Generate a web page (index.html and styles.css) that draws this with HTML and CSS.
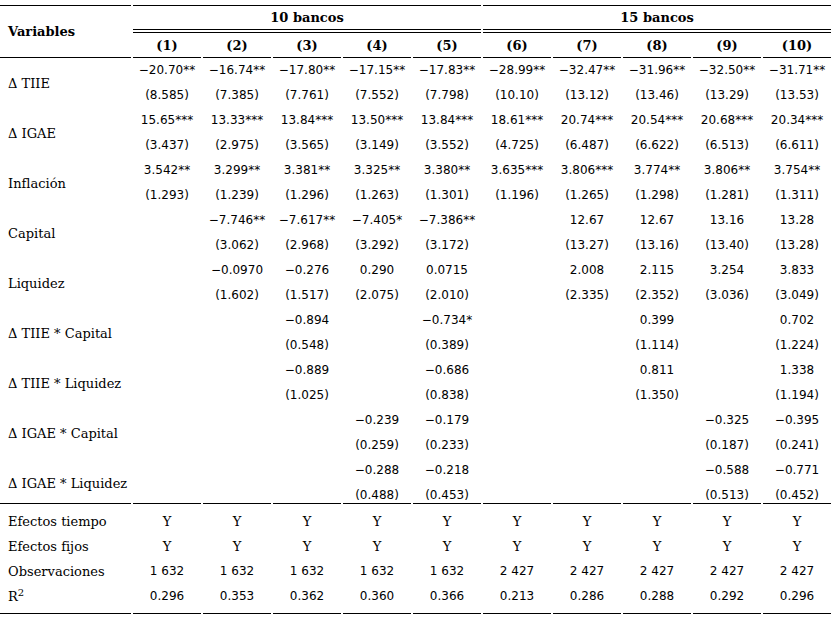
FILE: index.html
```html
<!DOCTYPE html>
<html lang="es">
<head>
<meta charset="utf-8">
<title>Resultados de la regresión</title>
<link rel="stylesheet" href="styles.css">
</head>
<body>
<table class="reg">
  <colgroup>
    <col class="c-label">
    <col class="c-num"><col class="c-num"><col class="c-num"><col class="c-num"><col class="c-num">
    <col class="c-num"><col class="c-num"><col class="c-num"><col class="c-num"><col class="c-num">
  </colgroup>
  <thead>
    <tr class="grp">
      <th class="var" rowspan="2">Variables</th>
      <th colspan="5">10 bancos</th>
      <th colspan="5">15 bancos</th>
    </tr>
    <tr class="mods">
      <th>(1)</th><th>(2)</th><th>(3)</th><th>(4)</th><th>(5)</th>
      <th>(6)</th><th>(7)</th><th>(8)</th><th>(9)</th><th>(10)</th>
    </tr>
  </thead>
  <tbody class="body">
    <tr><td class="lab" rowspan="2">Δ TIIE</td><td>−20.70**</td><td>−16.74**</td><td>−17.80**</td><td>−17.15**</td><td>−17.83**</td><td>−28.99**</td><td>−32.47**</td><td>−31.96**</td><td>−32.50**</td><td>−31.71**</td></tr>
    <tr><td>(8.585)</td><td>(7.385)</td><td>(7.761)</td><td>(7.552)</td><td>(7.798)</td><td>(10.10)</td><td>(13.12)</td><td>(13.46)</td><td>(13.29)</td><td>(13.53)</td></tr>
    <tr><td class="lab" rowspan="2">Δ IGAE</td><td>15.65***</td><td>13.33***</td><td>13.84***</td><td>13.50***</td><td>13.84***</td><td>18.61***</td><td>20.74***</td><td>20.54***</td><td>20.68***</td><td>20.34***</td></tr>
    <tr><td>(3.437)</td><td>(2.975)</td><td>(3.565)</td><td>(3.149)</td><td>(3.552)</td><td>(4.725)</td><td>(6.487)</td><td>(6.622)</td><td>(6.513)</td><td>(6.611)</td></tr>
    <tr><td class="lab" rowspan="2">Inflación</td><td>3.542**</td><td>3.299**</td><td>3.381**</td><td>3.325**</td><td>3.380**</td><td>3.635***</td><td>3.806***</td><td>3.774**</td><td>3.806**</td><td>3.754**</td></tr>
    <tr><td>(1.293)</td><td>(1.239)</td><td>(1.296)</td><td>(1.263)</td><td>(1.301)</td><td>(1.196)</td><td>(1.265)</td><td>(1.298)</td><td>(1.281)</td><td>(1.311)</td></tr>
    <tr><td class="lab" rowspan="2">Capital</td><td></td><td>−7.746**</td><td>−7.617**</td><td>−7.405*</td><td>−7.386**</td><td></td><td>12.67</td><td>12.67</td><td>13.16</td><td>13.28</td></tr>
    <tr><td></td><td>(3.062)</td><td>(2.968)</td><td>(3.292)</td><td>(3.172)</td><td></td><td>(13.27)</td><td>(13.16)</td><td>(13.40)</td><td>(13.28)</td></tr>
    <tr><td class="lab" rowspan="2">Liquidez</td><td></td><td>−0.0970</td><td>−0.276</td><td>0.290</td><td>0.0715</td><td></td><td>2.008</td><td>2.115</td><td>3.254</td><td>3.833</td></tr>
    <tr><td></td><td>(1.602)</td><td>(1.517)</td><td>(2.075)</td><td>(2.010)</td><td></td><td>(2.335)</td><td>(2.352)</td><td>(3.036)</td><td>(3.049)</td></tr>
    <tr><td class="lab" rowspan="2">Δ TIIE * Capital</td><td></td><td></td><td>−0.894</td><td></td><td>−0.734*</td><td></td><td></td><td>0.399</td><td></td><td>0.702</td></tr>
    <tr><td></td><td></td><td>(0.548)</td><td></td><td>(0.389)</td><td></td><td></td><td>(1.114)</td><td></td><td>(1.224)</td></tr>
    <tr><td class="lab" rowspan="2">Δ TIIE * Liquidez</td><td></td><td></td><td>−0.889</td><td></td><td>−0.686</td><td></td><td></td><td>0.811</td><td></td><td>1.338</td></tr>
    <tr><td></td><td></td><td>(1.025)</td><td></td><td>(0.838)</td><td></td><td></td><td>(1.350)</td><td></td><td>(1.194)</td></tr>
    <tr><td class="lab" rowspan="2">Δ IGAE * Capital</td><td></td><td></td><td></td><td>−0.239</td><td>−0.179</td><td></td><td></td><td></td><td>−0.325</td><td>−0.395</td></tr>
    <tr><td></td><td></td><td></td><td>(0.259)</td><td>(0.233)</td><td></td><td></td><td></td><td>(0.187)</td><td>(0.241)</td></tr>
    <tr><td class="lab lab-last" rowspan="2">Δ IGAE * Liquidez</td><td></td><td></td><td></td><td>−0.288</td><td>−0.218</td><td></td><td></td><td></td><td>−0.588</td><td>−0.771</td></tr>
    <tr class="se-last"><td></td><td></td><td></td><td>(0.488)</td><td>(0.453)</td><td></td><td></td><td></td><td>(0.513)</td><td>(0.452)</td></tr>
  </tbody>
  <tbody class="foot">
    <tr class="first"><td class="lab">Efectos tiempo</td><td class="yes">Y</td><td class="yes">Y</td><td class="yes">Y</td><td class="yes">Y</td><td class="yes">Y</td><td class="yes">Y</td><td class="yes">Y</td><td class="yes">Y</td><td class="yes">Y</td><td class="yes">Y</td></tr>
    <tr><td class="lab">Efectos fijos</td><td class="yes">Y</td><td class="yes">Y</td><td class="yes">Y</td><td class="yes">Y</td><td class="yes">Y</td><td class="yes">Y</td><td class="yes">Y</td><td class="yes">Y</td><td class="yes">Y</td><td class="yes">Y</td></tr>
    <tr><td class="lab">Observaciones</td><td>1 632</td><td>1 632</td><td>1 632</td><td>1 632</td><td>1 632</td><td>2 427</td><td>2 427</td><td>2 427</td><td>2 427</td><td>2 427</td></tr>
    <tr class="last"><td class="lab">R<sup>2</sup></td><td>0.296</td><td>0.353</td><td>0.362</td><td>0.360</td><td>0.366</td><td>0.213</td><td>0.286</td><td>0.288</td><td>0.292</td><td>0.296</td></tr>
  </tbody>
</table>
</body>
</html>
```

FILE: styles.css
```css
html, body {
  margin: 0;
  padding: 0;
  background: #ffffff;
}

.reg {
  border-collapse: separate;
  border-spacing: 2px 0;
  table-layout: fixed;
  width: 833px;
  margin: 5px 0 0 -2px;
  font-family: "DejaVu Serif", serif;
  font-size: 13px;
  color: #000000;
}

.c-label { width: 131px; }
.c-num { width: 68px; }

.reg th,
.reg td {
  padding: 0;
  text-align: center;
  vertical-align: middle;
  white-space: nowrap;
}

.reg th {
  font-weight: bold;
}

.grp th {
  height: 23px;
  border-top: 1px solid #000;
}

.grp th + th {
  border-bottom: 4px double #000;
}

.grp .var {
  text-align: left;
  padding-left: 8px;
  border-bottom: 1px solid #000;
}

.mods th {
  height: 24px;
  border-bottom: 1px solid #000;
}

.body td,
.foot td {
  height: 25px;
  line-height: 15px;
  font-family: "DejaVu Sans", sans-serif;
  font-size: 12px;
}

.reg td.lab {
  text-align: left;
  padding-left: 8px;
  font-family: "DejaVu Serif", serif;
  font-size: 13px;
}

.reg td.lab-last {
  padding-top: 5px;
}

.body .se-last td {
  height: 15px;
  padding-top: 5px;
}

.reg td.yes {
  font-family: "DejaVu Serif", serif;
  font-size: 13px;
}

.foot .first td {
  border-top: 1px solid #000;
  padding-top: 5px;
}

.foot .last td {
  border-bottom: 1px solid #000;
  padding-bottom: 4px;
}

.lab sup {
  font-size: 10px;
  line-height: 0;
}
```
